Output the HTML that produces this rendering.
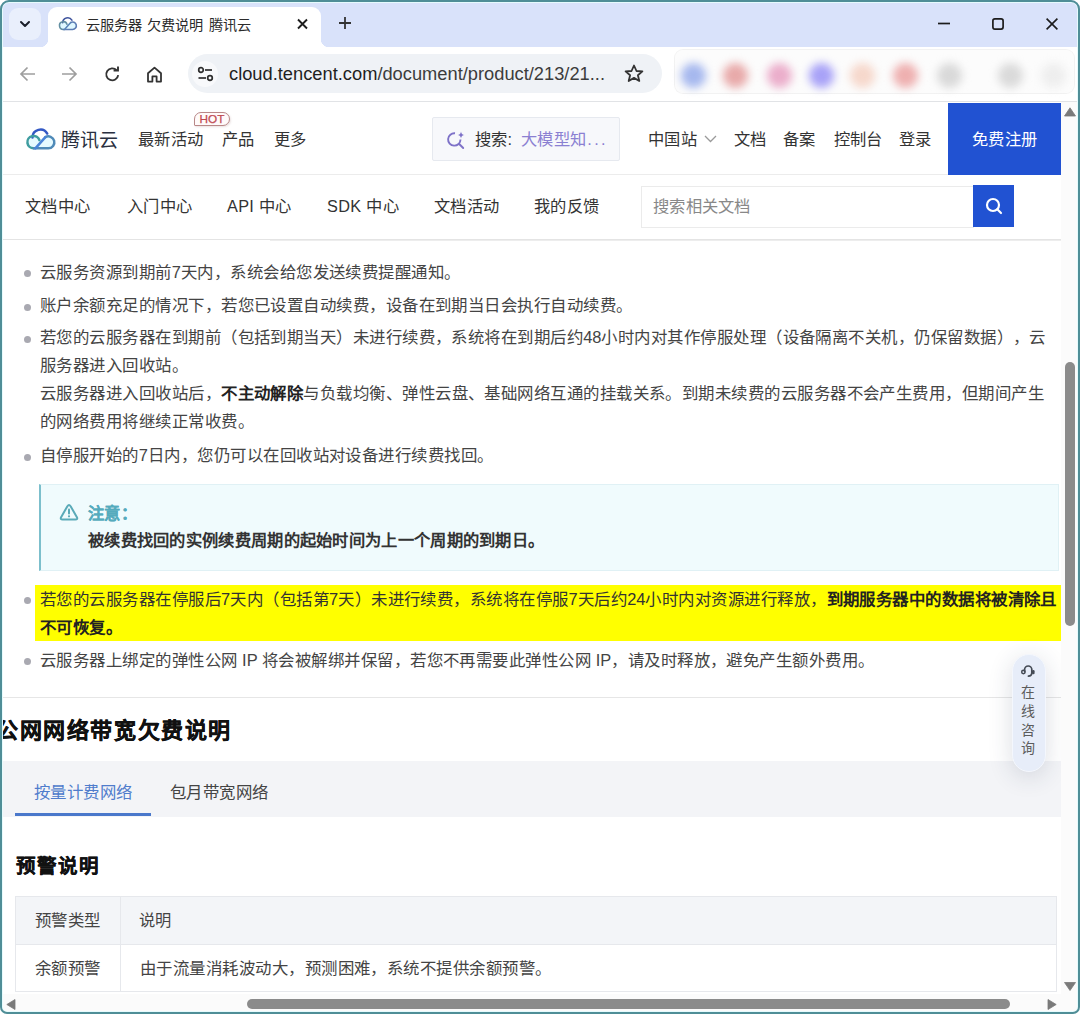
<!DOCTYPE html>
<html lang="zh-CN">
<head>
<meta charset="utf-8">
<style>
html,body{margin:0;padding:0;}
body{width:1080px;height:1014px;overflow:hidden;position:relative;background:#fff;font-family:"Liberation Sans",sans-serif;color:#333;}
.a{position:absolute;}
.t{position:absolute;white-space:nowrap;line-height:1;text-spacing-trim:space-all;}
svg{position:absolute;overflow:visible;}
/* chrome */
#strip{left:0;top:0;width:1080px;height:47px;background:#d9e2fa;border-radius:9px 9px 0 0;}
#chev{left:9px;top:8px;width:32px;height:32px;border-radius:9px;background:#e9effc;}
#tab{left:48px;top:7px;width:273px;height:41px;background:#fff;border-radius:9px 9px 0 0;}
#tabcl{left:40px;top:39px;width:8px;height:8px;background:radial-gradient(circle at 0 0,#d9e2fa 8px,#fff 8.5px);}
#tabcr{left:321px;top:39px;width:8px;height:8px;background:radial-gradient(circle at 100% 0,#d9e2fa 8px,#fff 8.5px);}
#toolbar{left:0;top:47px;width:1080px;height:54px;background:#fff;}
#tbline{left:0;top:101px;width:1080px;height:1px;background:#e1e3e6;}
#omni{left:188px;top:54px;width:474px;height:39px;border-radius:20px;background:#eff2f6;}
#siteinfo{left:192px;top:61px;width:26px;height:26px;border-radius:13px;background:#f8f9fb;}
#url{left:229px;top:64.5px;font-size:18.3px;color:#1f1f1f;}
#url span{color:#3c3c3c;}
.blur{position:absolute;width:25px;height:25px;border-radius:12.5px;filter:blur(4.5px);margin:-2px 0 0 -2.5px;}
#frame{left:0;top:0;width:1080px;height:1014px;box-sizing:border-box;border:2px solid #4f8e97;border-radius:9px 9px 7px 7px;pointer-events:none;z-index:50;}
#frame2{left:2px;top:2px;width:1076px;height:1010px;box-sizing:border-box;border:1px solid #e6fbfd;border-radius:7px 7px 5px 5px;pointer-events:none;z-index:49;}

.bul{position:absolute;left:24px;width:7px;height:7px;border-radius:50%;background:#a9a9b1;}
.p{position:absolute;left:40px;text-spacing-trim:space-all;white-space:nowrap;font-size:16.46px;letter-spacing:0.46px;line-height:20px;color:#444;}
.p b{color:#222;}
.n{letter-spacing:0;}
</style>
</head>
<body>
<!-- ===== browser chrome ===== -->
<div class="a" id="strip"></div>
<div class="a" id="chev"></div>
<svg style="left:19px;top:18px" width="12" height="12" viewBox="0 0 12 12"><path d="M2 4 L6 8 L10 4" fill="none" stroke="#1b1f2a" stroke-width="2" stroke-linecap="round" stroke-linejoin="round"/></svg>
<div class="a" id="tab"></div>
<div class="a" id="tabcl"></div>
<div class="a" id="tabcr"></div>
<svg style="left:55.5px;top:12.5px" width="24" height="20" viewBox="0 0 38 32"><path d="M17.4 18 A6.2 6.2 0 1 0 11.55 26.35 L26.35 26.35 A6 6 0 1 0 23.35 15.15 Z" fill="#dff8ff" stroke="none"/><path d="M10.5 15.5 A7.9 7.9 0 0 1 25.24 11.55" fill="none" stroke="#40559e" stroke-width="2.5" stroke-linecap="round"/><path d="M17.4 18 A6.2 6.2 0 1 0 11.8 26.35" fill="none" stroke="#628fa2" stroke-width="2.5" stroke-linecap="round"/><path d="M11.8 26.35 L26.35 26.35 A6 6 0 1 0 23.35 15.15" fill="none" stroke="#5c7db4" stroke-width="2.5" stroke-linecap="round"/><path d="M13.4 26.35 L23.35 15.15" fill="none" stroke="#5a85b8" stroke-width="2.5" stroke-linecap="round"/></svg>
<div class="t" style="left:86px;top:18px;font-size:14.2px;color:#2b2b2b;word-spacing:1px">云服务器 欠费说明</div><div class="t" style="left:209px;top:18px;font-size:14.2px;color:#2b2b2b;">腾讯云</div>
<svg style="left:297px;top:19px" width="11" height="10" viewBox="0 0 11 10"><path d="M1 0.5 L10 9.5 M10 0.5 L1 9.5" stroke="#1e1e1e" stroke-width="1.9"/></svg>
<svg style="left:338px;top:16px" width="14" height="14" viewBox="0 0 14 14"><path d="M7 1 V13 M1 7 H13" stroke="#333" stroke-width="1.8"/></svg>
<svg style="left:938px;top:22px" width="12" height="3" viewBox="0 0 12 3"><path d="M0 1.5 H12" stroke="#1c1c1c" stroke-width="1.7"/></svg>
<svg style="left:992px;top:18px" width="12" height="12" viewBox="0 0 12 12"><rect x="0.9" y="0.9" width="10.2" height="10.2" rx="2" fill="none" stroke="#1c1c1c" stroke-width="1.7"/></svg>
<svg style="left:1046px;top:18px" width="12" height="12" viewBox="0 0 12 12"><path d="M0.6 0.6 L11.4 11.4 M11.4 0.6 L0.6 11.4" stroke="#1c1c1c" stroke-width="1.6"/></svg>

<div class="a" id="toolbar"></div>
<div class="a" id="tbline"></div>
<!-- back / forward -->
<svg style="left:19px;top:66px" width="17" height="16" viewBox="0 0 17 16"><path d="M16 8 H2 M8.5 1.5 L2 8 L8.5 14.5" fill="none" stroke="#9e9e9e" stroke-width="1.7"/></svg>
<svg style="left:61px;top:66px" width="17" height="16" viewBox="0 0 17 16"><path d="M1 8 H15 M8.5 1.5 L15 8 L8.5 14.5" fill="none" stroke="#9e9e9e" stroke-width="1.7"/></svg>
<!-- reload -->
<svg style="left:104px;top:66px" width="17" height="17" viewBox="0 0 17 17"><path d="M14.2 9.2 A6 6 0 1 1 12.6 4.2" fill="none" stroke="#333" stroke-width="1.9"/><path d="M9.6 4.6 H14 V0.4" fill="none" stroke="#333" stroke-width="1.9"/></svg>
<!-- home -->
<svg style="left:146px;top:66px" width="17" height="17" viewBox="0 0 17 17"><path d="M2 7.2 L8.5 1.6 L15 7.2 V15.6 H10.6 V10.4 H6.4 V15.6 H2 Z" fill="none" stroke="#333" stroke-width="1.8" stroke-linejoin="round"/></svg>
<div class="a" id="omni"></div>
<div class="a" id="siteinfo"></div>
<svg style="left:197px;top:66px" width="17" height="16" viewBox="0 0 17 16"><circle cx="4" cy="4" r="2.3" fill="none" stroke="#2d2d2d" stroke-width="1.7"/><path d="M8 4 H15" stroke="#2d2d2d" stroke-width="1.7"/><circle cx="13" cy="12" r="2.3" fill="none" stroke="#2d2d2d" stroke-width="1.7"/><path d="M1.5 12 H9" stroke="#2d2d2d" stroke-width="1.7"/></svg>
<div class="t" id="url">cloud.tencent.com<span>/document/product/213/21...</span></div>
<svg style="left:624px;top:64px" width="20" height="19" viewBox="0 0 20 19"><path d="M10 1.5 L12.5 7 L18.4 7.4 L13.9 11.2 L15.3 17 L10 13.9 L4.7 17 L6.1 11.2 L1.6 7.4 L7.5 7 Z" fill="none" stroke="#333" stroke-width="1.8" stroke-linejoin="round"/></svg>
<div class="a" style="left:674px;top:49px;width:401px;height:45px;box-sizing:border-box;border:1px solid rgba(0,0,0,.045);border-radius:9px;background:rgba(0,0,0,.012);"></div>
<div class="blur" style="left:683px;top:65px;background:#a6b8ee"></div>
<div class="blur" style="left:725px;top:65px;background:#e8aaaa"></div>
<div class="blur" style="left:769px;top:65px;background:#ebaecb"></div>
<div class="blur" style="left:811px;top:65px;background:#a8a2f7"></div>
<div class="blur" style="left:852px;top:65px;background:#f6d8cc"></div>
<div class="blur" style="left:895px;top:65px;background:#eeb0b0"></div>
<div class="blur" style="left:939px;top:65px;background:#d9d9d9"></div>
<div class="blur" style="left:1000px;top:65px;background:#dadada"></div>
<div class="blur" style="left:1043px;top:65px;background:#eeeeee"></div>


<!-- header -->
<div class="a" style="left:2px;top:102px;width:1059px;height:72px;background:#fff;"></div>
<div class="a" style="left:2px;top:174px;width:1059px;height:1px;background:#ececec;"></div>
<svg style="left:22px;top:122px" width="38" height="32" viewBox="0 0 38 32"><path d="M17.4 18 A6.2 6.2 0 1 0 11.55 26.35 L26.35 26.35 A6 6 0 1 0 23.35 15.15 Z" fill="#e6faff" stroke="none"/><path d="M10.5 15.5 A7.9 7.9 0 0 1 25.24 11.55" fill="none" stroke="#3358c4" stroke-width="2.5" stroke-linecap="round"/><path d="M17.4 18 A6.2 6.2 0 1 0 11.8 26.35" fill="none" stroke="#3f9da0" stroke-width="2.5" stroke-linecap="round"/><path d="M11.8 26.35 L26.35 26.35 A6 6 0 1 0 23.35 15.15" fill="none" stroke="#4f8ab8" stroke-width="2.5" stroke-linecap="round"/><path d="M13.4 26.35 L23.35 15.15" fill="none" stroke="#4a84d8" stroke-width="2.5" stroke-linecap="round"/></svg>
<div class="t" style="left:61px;top:130.5px;font-size:19px;color:#2a3040;letter-spacing:0px">腾讯云</div>
<div class="t" style="left:138px;top:131px;font-size:16.3px;letter-spacing:0.3px;color:#333">最新活动</div>
<div class="t" style="left:222px;top:131px;font-size:16.3px;letter-spacing:0.3px;color:#333">产品</div>
<div class="t" style="left:274px;top:131px;font-size:16.3px;letter-spacing:0.3px;color:#333">更多</div>
<div class="a" style="left:194px;top:112px;width:34px;height:12px;border:1px solid #b98888;border-radius:7px 7px 7px 1px;background:#fffafa;box-shadow:1px 1px 2px rgba(120,60,60,.15);"></div>
<div class="t" style="left:199.5px;top:113.5px;font-size:11.8px;color:#bf4a52;-webkit-text-stroke:0.25px #bf4a52;">HOT</div>
<div class="a" style="left:432px;top:117px;width:186px;height:42px;border:1px solid #e6e9ef;border-radius:2px;background:#f7f8fb;"></div>
<svg style="left:446px;top:130px" width="20" height="20" viewBox="0 0 20 20"><path d="M14.5 9.5 A6.2 6.2 0 1 1 9 3.3" fill="none" stroke="#7e72c8" stroke-width="1.9"/><path d="M13.2 14 L17.2 18" stroke="#7e72c8" stroke-width="1.9" stroke-linecap="round"/><path d="M15 1.5 Q15.4 4.6 18.5 5 Q15.4 5.4 15 8.5 Q14.6 5.4 11.5 5 Q14.6 4.6 15 1.5Z" fill="#7e72c8"/></svg>
<div class="t" style="left:475px;top:131px;font-size:16.3px;letter-spacing:0.3px;color:#333">搜索:</div>
<div class="t" style="left:521px;top:131px;font-size:16.3px;letter-spacing:0.3px;color:#8b80d2">大模型知<span style="letter-spacing:2.4px;margin-left:1px">...</span></div>
<div class="t" style="left:648px;top:131px;font-size:16.3px;letter-spacing:0.3px;color:#333">中国站</div>
<svg style="left:704px;top:135px" width="13" height="8" viewBox="0 0 13 8"><path d="M1 1 L6.5 6.5 L12 1" fill="none" stroke="#9a9a9a" stroke-width="1.3"/></svg>
<div class="t" style="left:734px;top:131px;font-size:16.3px;letter-spacing:0.3px;color:#333">文档</div>
<div class="t" style="left:783px;top:131px;font-size:16.3px;letter-spacing:0.3px;color:#333">备案</div>
<div class="t" style="left:833.5px;top:131px;font-size:16.3px;letter-spacing:0.3px;color:#333">控制台</div>
<div class="t" style="left:899px;top:131px;font-size:16.3px;letter-spacing:0.3px;color:#333">登录</div>
<div class="a" style="left:948px;top:103px;width:113px;height:72px;background:#2152d2;"></div>
<div class="t" style="left:972px;top:131px;font-size:16.3px;letter-spacing:0.3px;color:#fff">免费注册</div>
<!-- subnav -->
<div class="a" style="left:2px;top:239px;width:1059px;height:1px;background:#e4e4e4;"></div>
<div class="a" style="left:270px;top:240px;width:791px;height:1px;background:#ededed;"></div>
<div class="t" style="left:25px;top:198px;font-size:16.3px;letter-spacing:0.3px;color:#333">文档中心</div>
<div class="t" style="left:127px;top:198px;font-size:16.3px;letter-spacing:0.3px;color:#333">入门中心</div>
<div class="t" style="left:227px;top:198px;font-size:16.3px;letter-spacing:0.3px;color:#333">API 中心</div>
<div class="t" style="left:327px;top:198px;font-size:16.3px;letter-spacing:0.3px;color:#333">SDK 中心</div>
<div class="t" style="left:434px;top:198px;font-size:16.3px;letter-spacing:0.3px;color:#333">文档活动</div>
<div class="t" style="left:534px;top:198px;font-size:16.3px;letter-spacing:0.3px;color:#333">我的反馈</div>
<div class="a" style="left:641px;top:186px;width:331px;height:40px;border:1px solid #ebebeb;background:#fff;"></div>
<div class="t" style="left:653px;top:198px;font-size:16.3px;letter-spacing:0.3px;color:#888">搜索相关文档</div>
<div class="a" style="left:973px;top:185px;width:41px;height:42px;background:#2152d2;"></div>
<svg style="left:985px;top:197px" width="18" height="18" viewBox="0 0 18 18"><circle cx="8" cy="8" r="6" fill="none" stroke="#fff" stroke-width="2.2"/><path d="M12.3 12.3 L16 16" stroke="#fff" stroke-width="2.2" stroke-linecap="round"/></svg>

<!-- content -->
<div class="a" id="content" style="left:0;top:0;">
<div class="bul" style="top:270px"></div>
<div class="p" style="top:262px">云服务资源到期前<span class="n">7</span>天内，系统会给您发送续费提醒通知。</div>
<div class="bul" style="top:304px"></div>
<div class="p" style="top:295px">账户余额充足的情况下，若您已设置自动续费，设备在到期当日会执行自动续费。</div>
<div class="bul" style="top:336px"></div>
<div class="p" style="top:327px">若您的云服务器在到期前（包括到期当天）未进行续费，系统将在到期后约<span class="n">48</span>小时内对其作停服处理（设备隔离不关机，仍保留数据），云</div>
<div class="p" style="top:355px">服务器进入回收站。</div>
<div class="p" style="top:383px">云服务器进入回收站后，<b>不主动解除</b>与负载均衡、弹性云盘、基础网络互通的挂载关系。到期未续费的云服务器不会产生费用，但期间产生</div>
<div class="p" style="top:411px">的网络费用将继续正常收费。</div>
<div class="bul" style="top:454px"></div>
<div class="p" style="top:445px">自停服开始的<span class="n">7</span>日内，您仍可以在回收站对设备进行续费找回。</div>

<div class="a" style="left:39px;top:484px;width:1017px;height:85px;background:#f0fbfd;border:1px solid #e0f1f5;border-left:2px solid #7cbfcc;"></div>
<svg style="left:59px;top:503px" width="20" height="18" viewBox="0 0 20 18"><path d="M8.4 3.2 Q10 0.9 11.6 3.2 L17.9 14.2 Q19 16.6 16.4 16.6 H3.6 Q1 16.6 2.1 14.2 Z" fill="none" stroke="#5aaab8" stroke-width="2" stroke-linejoin="round"/><path d="M10 6.6 V10.4" stroke="#5aaab8" stroke-width="2" stroke-linecap="round"/><circle cx="10" cy="13.3" r="1.1" fill="#5aaab8"/></svg>
<div class="t" style="left:88px;top:505px;font-size:16.3px;letter-spacing:0.3px;color:#55abbd;font-weight:bold;-webkit-text-stroke:0.12px #55abbd">注意：</div>
<div class="t" style="left:88px;top:532px;font-size:16.3px;letter-spacing:0.3px;color:#333;font-weight:bold">被续费找回的实例续费周期的起始时间为上一个周期的到期日。</div>

<div class="a" style="left:35px;top:585px;width:1027px;height:55.5px;background:#ffff00;"></div>
<div class="bul" style="top:597px"></div>
<div class="p" style="top:588.5px;color:#333">若您的云服务器在停服后<span class="n">7</span>天内（包括第<span class="n">7</span>天）未进行续费，系统将在停服<span class="n">7</span>天后约<span class="n">24</span>小时内对资源进行释放，<b>到期服务器中的数据将被清除且</b></div>
<div class="p" style="top:617px"><b>不可恢复。</b></div>
<div class="bul" style="top:658px"></div>
<div class="p" style="top:649.5px">云服务器上绑定的弹性公网<span class="n"> IP </span>将会被解绑并保留，若您不再需要此弹性公网<span class="n"> IP</span>，请及时释放，避免产生额外费用。</div>
</div>

<div class="a" style="left:2px;top:697px;width:1059px;height:1px;background:#e6e6e6;"></div>
<div class="t" style="left:-4px;top:719.5px;font-size:22px;letter-spacing:1.6px;color:#111;font-weight:bold;-webkit-text-stroke:0.35px #111">公网网络带宽欠费说明</div>
<div class="a" style="left:2px;top:761px;width:1059px;height:56px;background:#f3f4f7;"></div>
<div class="t" style="left:34px;top:784px;font-size:16.46px;letter-spacing:0.46px;color:#4f7ccc">按量计费网络</div>
<div class="t" style="left:170px;top:784px;font-size:16.46px;letter-spacing:0.46px;color:#444">包月带宽网络</div>
<div class="a" style="left:15px;top:813px;width:136px;height:3px;background:#4a78cb;"></div>

<div class="t" style="left:15.5px;top:857px;font-size:19.5px;letter-spacing:1.2px;color:#111;font-weight:bold;-webkit-text-stroke:0.3px #111">预警说明</div>
<div class="a" style="left:15px;top:896px;width:1042px;height:96px;border:1px solid #e6e8ec;box-sizing:border-box;"></div>
<div class="a" style="left:16px;top:897px;width:1040px;height:48px;background:#f3f5f8;"></div>
<div class="a" style="left:16px;top:944px;width:1040px;height:1px;background:#e6e8ec;"></div>
<div class="a" style="left:120px;top:897px;width:1px;height:95px;background:#e6e8ec;"></div>
<div class="t" style="left:35px;top:912px;font-size:16.46px;letter-spacing:0.46px;color:#444">预警类型</div>
<div class="t" style="left:139px;top:912px;font-size:16.3px;letter-spacing:0.3px;color:#444">说明</div>
<div class="t" style="left:35px;top:960px;font-size:16.46px;letter-spacing:0.46px;color:#444">余额预警</div>
<div class="t" style="left:140px;top:960px;font-size:16.46px;letter-spacing:0.46px;color:#444">由于流量消耗波动大，预测困难，系统不提供余额预警。</div>

<!-- widget -->
<div class="a" style="left:1012px;top:654px;width:32px;height:116px;border:1px solid #f4f7fd;border-radius:17px;background:#e7edf9;box-shadow:0 5px 24px rgba(40,50,80,.16);"></div>
<svg style="left:1020px;top:663px" width="16" height="16" viewBox="0 0 16 16"><path d="M4.6 8.6 V6.6 A3.6 3.6 0 0 1 11.8 6.6 V10.2 Q11.6 13 8.4 13.1" fill="none" stroke="#454b55" stroke-width="1.7" stroke-linecap="round"/><circle cx="3.4" cy="9" r="1.7" fill="none" stroke="#454b55" stroke-width="1.5"/><rect x="12" y="7" width="2.6" height="4.2" rx="1.2" fill="#454b55"/></svg>
<div class="t" style="left:1021px;top:683px;font-size:14px;color:#5c5c5c;line-height:18.8px;width:15px;white-space:normal;">在线咨询</div>
<!-- scrollbars -->
<div class="a" style="left:1061px;top:102px;width:17px;height:892px;background:#fbfbfb;"></div>
<svg style="left:1064px;top:107px" width="12" height="10" viewBox="0 0 12 10"><path d="M6 0.8 L11.5 9 H0.5 Z" fill="#7a7a7a" stroke="#7a7a7a" stroke-width="0.8" stroke-linejoin="round"/></svg>
<div class="a" style="left:1065px;top:362px;width:10px;height:264px;border-radius:5px;background:#8b8b8b;"></div>
<svg style="left:1064px;top:982px" width="12" height="9" viewBox="0 0 12 9"><path d="M0.5 0.5 H11.5 L6 8.5 Z" fill="#7a7a7a" stroke="#7a7a7a" stroke-width="0.8" stroke-linejoin="round"/></svg>
<div class="a" style="left:2px;top:994px;width:1076px;height:18px;background:#fbfbfb;border-radius:0 0 6px 6px;"></div>
<svg style="left:6px;top:999px" width="10" height="11" viewBox="0 0 10 11"><path d="M9 0.5 V10.5 L0.8 5.5 Z" fill="#7a7a7a" stroke="#7a7a7a" stroke-width="0.8" stroke-linejoin="round"/></svg>
<div class="a" style="left:247px;top:999px;width:763px;height:10px;border-radius:5px;background:#8b8b8b;"></div>
<svg style="left:1047px;top:999px" width="10" height="11" viewBox="0 0 10 11"><path d="M1 0.5 V10.5 L9.2 5.5 Z" fill="#7a7a7a" stroke="#7a7a7a" stroke-width="0.8" stroke-linejoin="round"/></svg>


<div class="a" id="frame2"></div>
<div class="a" id="frame"></div>
</body>
</html>
